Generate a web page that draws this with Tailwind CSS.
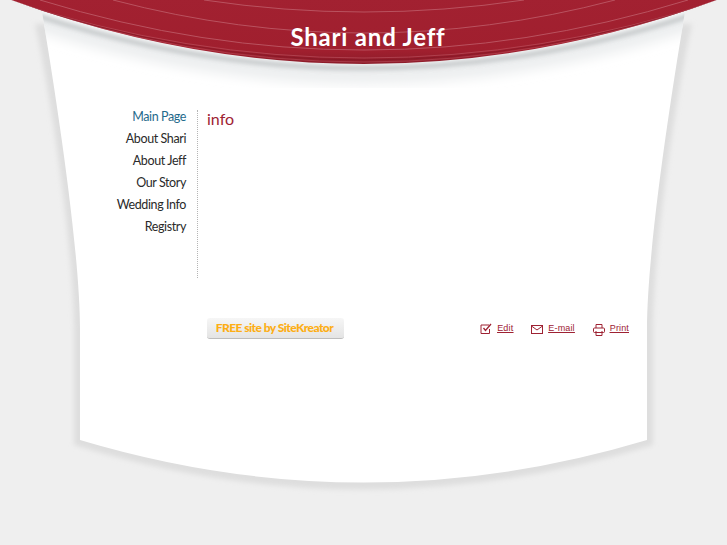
<!DOCTYPE html>
<html><head><meta charset="utf-8"><script src="https://cdn.jsdelivr.net/npm/@tailwindcss/browser@4"></script></head>
<body class="bg-[#efefef] overflow-hidden">
<div class="relative w-[727px] h-[545px] overflow-hidden bg-[#efefef] font-['Lato',sans-serif]">
<svg class="absolute inset-0" width="727" height="545" viewBox="0 0 727 545" fill="none">
<defs>
<filter id="b2" x="-10%" y="-10%" width="120%" height="120%"><feGaussianBlur stdDeviation="2.5"/></filter>
<filter id="b4" x="-10%" y="-20%" width="120%" height="140%"><feGaussianBlur stdDeviation="6"/></filter>
<filter id="b1" x="-10%" y="-20%" width="120%" height="140%"><feGaussianBlur stdDeviation="2"/></filter>
<linearGradient id="red" x1="0" y1="0" x2="0" y2="1"><stop offset="0" stop-color="#a22131"/><stop offset="0.8" stop-color="#a01f2e"/><stop offset="1" stop-color="#8c1c2a"/></linearGradient>
<clipPath id="panel"><path d="M40 0 C56 95 80 250 80 330 L80 440 Q364 525 647 440 L647 330 C647 250 671 95 687 0 Z"/></clipPath>
<clipPath id="band"><path d="M6 -2 Q364 130 722 -2 Z"/></clipPath>
</defs>
<path d="M35 24 C51 95 74 250 74 330 L74 445 Q364 534 653 445 L653 330 C653 250 676 95 692 24 Z" fill="#dedede" filter="url(#b2)"/>
<path d="M40 0 C56 95 80 250 80 330 L80 440 Q364 525 647 440 L647 330 C647 250 671 95 687 0 Z" fill="#fff"/>
<g clip-path="url(#panel)">
<path d="M0 8 Q364 140 727 8" stroke="#e6e8ea" stroke-opacity="0.75" stroke-width="20" filter="url(#b4)"/>
<path d="M0 3 Q364 133 727 3" stroke="#8f9397" stroke-opacity="0.42" stroke-width="5" filter="url(#b1)"/>
</g>
<path d="M6 -2 Q364 130 722 -2 Z" fill="url(#red)"/>
<g clip-path="url(#band)" stroke-width="1">
<path d="M204 0 Q364 24 524 0" stroke="#bf5f6b" stroke-opacity="0.8"/>
<path d="M113 0 Q364 66 615 0" stroke="#bf5f6b" stroke-opacity="0.8"/>
<path d="M40 0 Q364 100 688 0" stroke="#bf5f6b" stroke-opacity="0.8"/>
<path d="M8 0 Q364 116 720 0" stroke="#b84e5b" stroke-opacity="0.7"/>
<path d="M8 0 Q364 120 720 0" stroke="#7f1825" stroke-opacity="0.6"/>
<path d="M8 0 Q364 124 720 0" stroke="#bb5562" stroke-opacity="0.5"/>
</g>
</svg>

<div class="relative">
<header class="h-[110px] pt-[19px] pl-[9px] text-center">
<h1 class="font-['Lato',sans-serif] text-[24px] leading-[36px] font-bold text-white tracking-[0.8px]">Shari and Jeff</h1>
</header>
<main class="flex pl-[80px] h-[168px]">
<nav class="w-[106px] text-right text-[12.5px] leading-[22px] font-normal text-[#2a2a2a] tracking-[-0.4px] -mt-[4px] h-[132px]">
<a class="block text-[#1f6a8c]">Main Page</a>
<a class="block">About Shari</a>
<a class="block">About Jeff</a>
<a class="block">Our Story</a>
<a class="block">Wedding Info</a>
<a class="block">Registry</a>
</nav>
<div class="ml-[11px] border-l border-dotted border-[#b5b5b5] pl-[9px] h-[168px]">
<h2 class="text-[16px] leading-[18px] text-[#9e2233]">info</h2>
</div>
</main>
<footer class="flex items-center pl-[207px] pr-[98px] mt-[40px] h-[21px]">
<a class="flex items-center justify-center w-[137px] h-[21px] pr-[2px] rounded-[3px] bg-gradient-to-b from-[#f6f6f6] to-[#e4e4e4] border-b border-[#bdbdbd] text-[12px] font-black tracking-[-0.55px] text-[#fdae14]">FREE site by SiteKreator</a>
<div class="ml-auto flex items-center font-['Liberation_Sans',sans-serif] text-[9px] text-[#9e2233] underline tracking-[0.15px]">
<svg width="12" height="12" viewBox="0 0 12 12" fill="none" stroke="#9e2233" class="mr-[5px]"><path d="M9.5 6v4.500h-8.500v-8.500h8"/><path d="M3.500 5l2 2.500 5.500-6.500" stroke-width="1.300"/></svg>
<a class="mr-[18px]">Edit</a>
<svg width="12" height="9" viewBox="0 0 12 9" fill="none" stroke="#9e2233" class="mr-[5px] mt-[2px]"><rect x=".5" y=".5" width="11" height="8"/><path d="M.5 1l5.500 4 5.500-4"/></svg>
<a class="mr-[18px]">E-mail</a>
<svg width="12" height="12" viewBox="0 0 12 12" fill="none" stroke="#9e2233" class="mr-[5px] mt-[2px]"><path d="M3 4V.5h6V4"/><rect x=".5" y="4" width="11" height="4.500" rx="1"/><path d="M3 7v4.500h6V7"/></svg>
<a>Print</a>
</div>
</footer>
</div>
</div>
</body></html>
